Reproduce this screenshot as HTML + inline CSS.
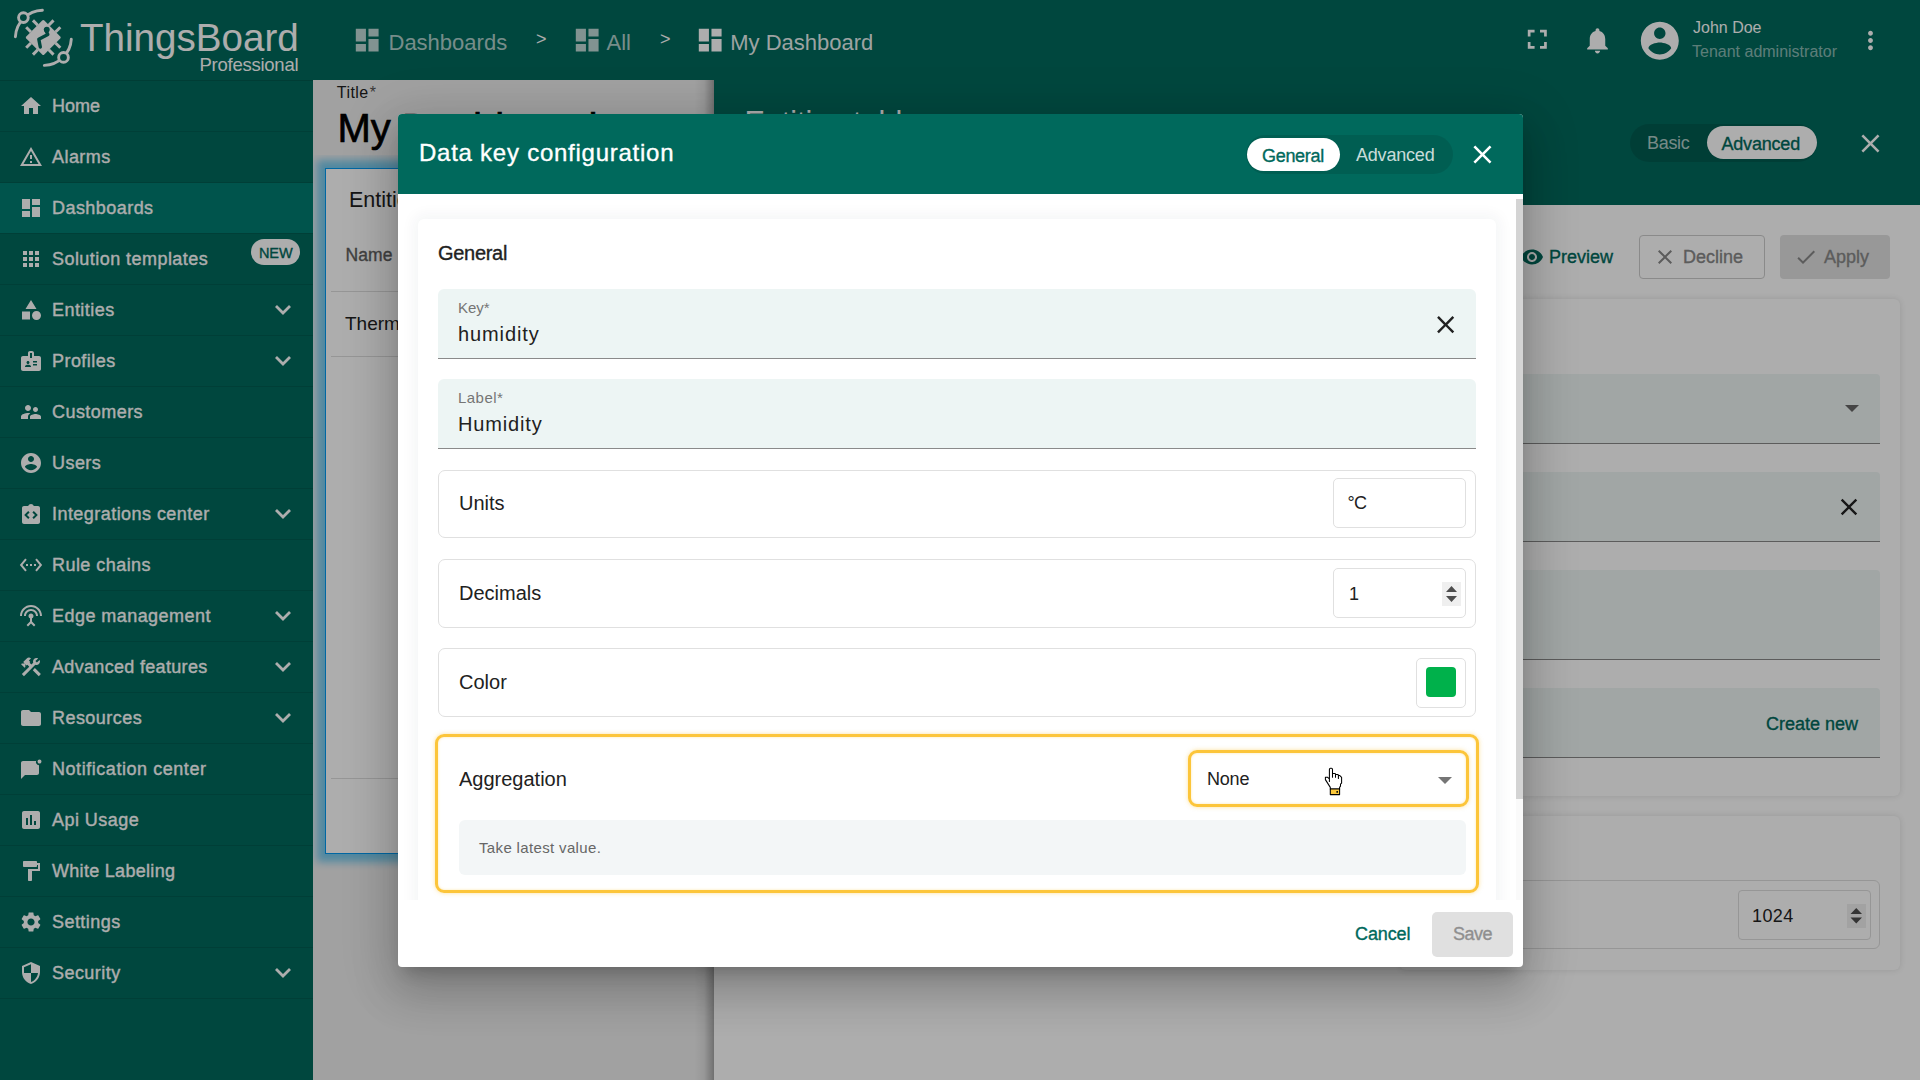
<!DOCTYPE html>
<html><head><meta charset="utf-8">
<style>
*{box-sizing:border-box;margin:0;padding:0}
html,body{width:1920px;height:1080px;overflow:hidden;background:#fff;font-family:"Liberation Sans",sans-serif}
.abs{position:absolute}
.t{position:absolute;white-space:nowrap;line-height:1}
</style></head>
<body>
<div class="abs" style="left:0px;top:0px;width:313px;height:1080px;background:#00695c"></div>
<div class="abs" style="left:0px;top:80px;width:313px;height:1px;background:#005a4f"></div>
<div class="abs" style="left:0px;top:131px;width:313px;height:1px;background:#005e52"></div>
<svg class="abs" style="left:19px;top:94px;" width="24" height="24" viewBox="0 0 24 24"><path d="M10 20v-6h4v6h5v-8h3L12 3 2 12h3v8z" fill="#fff"/></svg>
<div class="t" style="left:52px;top:96.76px;font-size:18px;color:#fff;font-weight:normal;-webkit-text-stroke-width:0.35px;letter-spacing:0.0px">Home</div>
<div class="abs" style="left:0px;top:182px;width:313px;height:1px;background:#005e52"></div>
<svg class="abs" style="left:19px;top:145px;" width="24" height="24" viewBox="0 0 24 24"><path d="M12 5.99L19.53 19H4.47L12 5.99M12 2L1 21h22L12 2zm1 14h-2v2h2v-2zm0-6h-2v4h2v-4z" fill="#fff"/></svg>
<div class="t" style="left:52px;top:147.76px;font-size:18px;color:#fff;font-weight:normal;-webkit-text-stroke-width:0.35px;letter-spacing:0.45px">Alarms</div>
<div class="abs" style="left:0px;top:183px;width:313px;height:50px;background:#007c70"></div>
<div class="abs" style="left:0px;top:233px;width:313px;height:1px;background:#005e52"></div>
<svg class="abs" style="left:19px;top:196px;" width="24" height="24" viewBox="0 0 24 24"><path d="M3 13h8V3H3v10zm0 8h8v-6H3v6zm10 0h8V11h-8v10zm0-18v6h8V3h-8z" fill="#fff"/></svg>
<div class="t" style="left:52px;top:198.76px;font-size:18px;color:#fff;font-weight:normal;-webkit-text-stroke-width:0.35px;letter-spacing:0.45px">Dashboards</div>
<div class="abs" style="left:0px;top:284px;width:313px;height:1px;background:#005e52"></div>
<svg class="abs" style="left:19px;top:247px;" width="24" height="24" viewBox="0 0 24 24"><path d="M4 8h4V4H4v4zm6 12h4v-4h-4v4zm-6 0h4v-4H4v4zm0-6h4v-4H4v4zm6 0h4v-4h-4v4zm6-10v4h4V4h-4zm-6 4h4V4h-4v4zm6 6h4v-4h-4v4zm0 6h4v-4h-4v4z" fill="#fff"/></svg>
<div class="t" style="left:52px;top:249.76px;font-size:18px;color:#fff;font-weight:normal;-webkit-text-stroke-width:0.35px;letter-spacing:0.45px">Solution templates</div>
<div class="abs" style="left:0px;top:335px;width:313px;height:1px;background:#005e52"></div>
<svg class="abs" style="left:19px;top:298px;" width="24" height="24" viewBox="0 0 24 24"><path d="M12 2l-5.5 9h11L12 2zm5.5 11c-2.49 0-4.5 2.01-4.5 4.5s2.01 4.5 4.5 4.5 4.5-2.01 4.5-4.5-2.01-4.5-4.5-4.5zM3 21.5h8v-8H3v8z" fill="#fff"/></svg>
<div class="t" style="left:52px;top:300.76px;font-size:18px;color:#fff;font-weight:normal;-webkit-text-stroke-width:0.35px;letter-spacing:0.45px">Entities</div>
<svg class="abs" style="left:273px;top:297px;" width="20" height="20" viewBox="0 0 20 20"><polyline points="3,9 10,16 17,9" fill="none" stroke="#fff" stroke-width="2.8"/></svg>
<div class="abs" style="left:0px;top:386px;width:313px;height:1px;background:#005e52"></div>
<svg class="abs" style="left:19px;top:349px;" width="24" height="24" viewBox="0 0 24 24"><path d="M20 7h-5V4c0-1.1-.9-2-2-2h-2c-1.1 0-2 .9-2 2v3H4c-1.1 0-2 .9-2 2v11c0 1.1.9 2 2 2h16c1.1 0 2-.9 2-2V9c0-1.1-.9-2-2-2zM9 12c.83 0 1.5.67 1.5 1.5S9.83 15 9 15s-1.5-.67-1.5-1.5S8.17 12 9 12zm3 6H6v-.43c0-.6.36-1.15.92-1.39.64-.28 1.34-.43 2.08-.43s1.44.15 2.08.43c.55.24.92.78.92 1.39V18zm1-9h-2V4h2v5zm5 7.5h-4V15h4v1.5zm0-3h-4V12h4v1.5z" fill="#fff"/></svg>
<div class="t" style="left:52px;top:351.76px;font-size:18px;color:#fff;font-weight:normal;-webkit-text-stroke-width:0.35px;letter-spacing:0.45px">Profiles</div>
<svg class="abs" style="left:273px;top:348px;" width="20" height="20" viewBox="0 0 20 20"><polyline points="3,9 10,16 17,9" fill="none" stroke="#fff" stroke-width="2.8"/></svg>
<div class="abs" style="left:0px;top:437px;width:313px;height:1px;background:#005e52"></div>
<svg class="abs" style="left:19px;top:400px;" width="24" height="24" viewBox="0 0 24 24"><path d="M16.5 12c1.38 0 2.49-1.12 2.49-2.5S17.88 7 16.5 7C15.12 7 14 8.12 14 9.5s1.12 2.5 2.5 2.5zM9 11c1.66 0 2.99-1.34 2.99-3S10.66 5 9 5C7.34 5 6 6.34 6 8s1.34 3 3 3zm7.5 3c-1.83 0-5.5.92-5.5 2.75V19h11v-2.25c0-1.83-3.67-2.75-5.5-2.75zM9 13c-2.33 0-7 1.17-7 3.5V19h7v-2.25c0-.85.33-2.34 2.37-3.47C10.5 13.1 9.66 13 9 13z" fill="#fff"/></svg>
<div class="t" style="left:52px;top:402.76px;font-size:18px;color:#fff;font-weight:normal;-webkit-text-stroke-width:0.35px;letter-spacing:0.45px">Customers</div>
<div class="abs" style="left:0px;top:488px;width:313px;height:1px;background:#005e52"></div>
<svg class="abs" style="left:19px;top:451px;" width="24" height="24" viewBox="0 0 24 24"><path d="M12 2C6.48 2 2 6.48 2 12s4.48 10 10 10 10-4.48 10-10S17.52 2 12 2zm0 3c1.66 0 3 1.34 3 3s-1.34 3-3 3-3-1.34-3-3 1.34-3 3-3zm0 14.2c-2.5 0-4.71-1.28-6-3.22.03-1.99 4-3.08 6-3.08 1.99 0 5.97 1.09 6 3.08-1.29 1.94-3.5 3.22-6 3.22z" fill="#fff"/></svg>
<div class="t" style="left:52px;top:453.76px;font-size:18px;color:#fff;font-weight:normal;-webkit-text-stroke-width:0.35px;letter-spacing:0.45px">Users</div>
<div class="abs" style="left:0px;top:539px;width:313px;height:1px;background:#005e52"></div>
<svg class="abs" style="left:19px;top:502px;" width="24" height="24" viewBox="0 0 24 24"><path d="M19 4h-4.2c-.4-1.2-1.5-2-2.8-2s-2.4.8-2.8 2H5c-1.1 0-2 .9-2 2v14c0 1.1.9 2 2 2h14c1.1 0 2-.9 2-2V6c0-1.1-.9-2-2-2zM10.6 15.6L9.2 17l-4-4 4-4 1.4 1.4L8 13l2.6 2.6zm4.2 1.4l-1.4-1.4L16 13l-2.6-2.6L14.8 9l4 4-4 4z" fill="#fff"/></svg>
<div class="t" style="left:52px;top:504.76px;font-size:18px;color:#fff;font-weight:normal;-webkit-text-stroke-width:0.35px;letter-spacing:0.45px">Integrations center</div>
<svg class="abs" style="left:273px;top:501px;" width="20" height="20" viewBox="0 0 20 20"><polyline points="3,9 10,16 17,9" fill="none" stroke="#fff" stroke-width="2.8"/></svg>
<div class="abs" style="left:0px;top:590px;width:313px;height:1px;background:#005e52"></div>
<svg class="abs" style="left:19px;top:553px;" width="24" height="24" viewBox="0 0 24 24"><path d="M7.77 6.76L6.23 5.48.82 12l5.41 6.52 1.54-1.28L3.42 12l4.35-5.24zM7 13h2v-2H7v2zm10-2h-2v2h2v-2zm-6 2h2v-2h-2v2zm6.77-7.52l-1.54 1.28L20.58 12l-4.35 5.24 1.54 1.28L23.18 12l-5.41-6.52z" fill="#fff"/></svg>
<div class="t" style="left:52px;top:555.76px;font-size:18px;color:#fff;font-weight:normal;-webkit-text-stroke-width:0.35px;letter-spacing:0.45px">Rule chains</div>
<div class="abs" style="left:0px;top:641px;width:313px;height:1px;background:#005e52"></div>
<svg class="abs" style="left:19px;top:604px;" width="24" height="24" viewBox="0 0 24 24"><path d="M12 5c-3.87 0-7 3.13-7 7h2c0-2.76 2.24-5 5-5s5 2.24 5 5h2c0-3.87-3.13-7-7-7zm1 9.29c.88-.39 1.5-1.26 1.5-2.29 0-1.38-1.12-2.5-2.5-2.5S9.5 10.62 9.5 12c0 1.02.62 1.9 1.5 2.29v3.3L7.59 21 9 22.41l3-3 3 3L16.41 21 13 17.59v-3.3zM12 1C5.93 1 1 5.93 1 12h2c0-4.97 4.03-9 9-9s9 4.03 9 9h2c0-6.070-4.93-11-11-11z" fill="#fff"/></svg>
<div class="t" style="left:52px;top:606.76px;font-size:18px;color:#fff;font-weight:normal;-webkit-text-stroke-width:0.35px;letter-spacing:0.45px">Edge management</div>
<svg class="abs" style="left:273px;top:603px;" width="20" height="20" viewBox="0 0 20 20"><polyline points="3,9 10,16 17,9" fill="none" stroke="#fff" stroke-width="2.8"/></svg>
<div class="abs" style="left:0px;top:692px;width:313px;height:1px;background:#005e52"></div>
<svg class="abs" style="left:19px;top:655px;" width="24" height="24" viewBox="0 0 24 24"><path d="M13.783 15.172l2.121-2.121 5.996 5.996-2.121 2.121zM17.5 10c1.93 0 3.5-1.57 3.5-3.5 0-.58-.16-1.12-.41-1.6l-2.7 2.7-1.49-1.49 2.7-2.7c-.48-.25-1.02-.41-1.6-.41C15.57 3 14 4.57 14 6.5c0 .41.08.8.21 1.16l-1.85 1.85-1.78-1.78.71-.71-1.41-1.41L12 3.49c-1.17-1.17-3.07-1.17-4.24 0L4.22 7.03l1.41 1.41H2.81l-.71.71 3.54 3.54.71-.71V9.15l1.41 1.41.71-.71 1.78 1.78-7.41 7.41 2.12 2.12L16.34 9.79c.36.13.75.21 1.16.21z" fill="#fff"/></svg>
<div class="t" style="left:52px;top:657.76px;font-size:18px;color:#fff;font-weight:normal;-webkit-text-stroke-width:0.35px;letter-spacing:0.32px">Advanced features</div>
<svg class="abs" style="left:273px;top:654px;" width="20" height="20" viewBox="0 0 20 20"><polyline points="3,9 10,16 17,9" fill="none" stroke="#fff" stroke-width="2.8"/></svg>
<div class="abs" style="left:0px;top:743px;width:313px;height:1px;background:#005e52"></div>
<svg class="abs" style="left:19px;top:706px;" width="24" height="24" viewBox="0 0 24 24"><path d="M10 4H4c-1.1 0-1.99.9-1.99 2L2 18c0 1.1.9 2 2 2h16c1.1 0 2-.9 2-2V8c0-1.1-.9-2-2-2h-8l-2-2z" fill="#fff"/></svg>
<div class="t" style="left:52px;top:708.76px;font-size:18px;color:#fff;font-weight:normal;-webkit-text-stroke-width:0.35px;letter-spacing:0.45px">Resources</div>
<svg class="abs" style="left:273px;top:705px;" width="20" height="20" viewBox="0 0 20 20"><polyline points="3,9 10,16 17,9" fill="none" stroke="#fff" stroke-width="2.8"/></svg>
<div class="abs" style="left:0px;top:794px;width:313px;height:1px;background:#005e52"></div>
<svg class="abs" style="left:19px;top:757px;" width="24" height="24" viewBox="0 0 24 24"><path d="M17.5 3.5A3 3 0 0 0 20 8.2V16c0 1.1-.9 2-2 2H6l-4 4V6c0-1.1.9-2 2-2h13.5zM20.5 2.5a2 2 0 1 1 0 4 2 2 0 0 1 0-4z" fill="#fff"/></svg>
<div class="t" style="left:52px;top:759.76px;font-size:18px;color:#fff;font-weight:normal;-webkit-text-stroke-width:0.35px;letter-spacing:0.55px">Notification center</div>
<div class="abs" style="left:0px;top:845px;width:313px;height:1px;background:#005e52"></div>
<svg class="abs" style="left:19px;top:808px;" width="24" height="24" viewBox="0 0 24 24"><path d="M19 3H5c-1.1 0-2 .9-2 2v14c0 1.1.9 2 2 2h14c1.1 0 2-.9 2-2V5c0-1.1-.9-2-2-2zM9 17H7v-7h2v7zm4 0h-2V7h2v10zm4 0h-2v-4h2v4z" fill="#fff"/></svg>
<div class="t" style="left:52px;top:810.76px;font-size:18px;color:#fff;font-weight:normal;-webkit-text-stroke-width:0.35px;letter-spacing:0.45px">Api Usage</div>
<div class="abs" style="left:0px;top:896px;width:313px;height:1px;background:#005e52"></div>
<svg class="abs" style="left:19px;top:859px;" width="24" height="24" viewBox="0 0 24 24"><path d="M18 4V3c0-.55-.45-1-1-1H5c-.55 0-1 .45-1 1v4c0 .55.45 1 1 1h12c.55 0 1-.45 1-1V6h1v4H9v11c0 .55.45 1 1 1h2c.55 0 1-.45 1-1v-9h8V4h-3z" fill="#fff"/></svg>
<div class="t" style="left:52px;top:861.76px;font-size:18px;color:#fff;font-weight:normal;-webkit-text-stroke-width:0.35px;letter-spacing:0.3px">White Labeling</div>
<div class="abs" style="left:0px;top:947px;width:313px;height:1px;background:#005e52"></div>
<svg class="abs" style="left:19px;top:910px;" width="24" height="24" viewBox="0 0 24 24"><path d="M19.14 12.94c.04-.3.06-.61.06-.94 0-.32-.02-.64-.07-.94l2.03-1.58c.18-.14.23-.41.12-.61l-1.92-3.32c-.12-.22-.37-.29-.59-.22l-2.39.96c-.5-.38-1.03-.7-1.62-.94l-.36-2.54c-.04-.24-.24-.41-.48-.41h-3.84c-.24 0-.43.17-.47.41l-.36 2.54c-.59.24-1.130.57-1.62.94l-2.39-.96c-.22-.08-.47 0-.59.22L2.74 8.87c-.12.21-.08.47.12.61l2.03 1.58c-.05.3-.09.63-.09.94s.02.64.07.94l-2.03 1.58c-.18.14-.23.41-.12.61l1.92 3.32c.12.22.37.29.59.22l2.39-.96c.5.38 1.03.7 1.62.94l.36 2.54c.05.24.24.41.48.41h3.84c.24 0 .44-.17.47-.41l.36-2.54c.59-.24 1.13-.56 1.62-.94l2.39.96c.22.08.47 0 .59-.22l1.92-3.32c.12-.22.07-.47-.12-.61l-2.01-1.58zM12 15.6c-1.98 0-3.6-1.62-3.6-3.6s1.62-3.6 3.6-3.6 3.6 1.62 3.6 3.6-1.62 3.6-3.6 3.6z" fill="#fff"/></svg>
<div class="t" style="left:52px;top:912.76px;font-size:18px;color:#fff;font-weight:normal;-webkit-text-stroke-width:0.35px;letter-spacing:0.45px">Settings</div>
<div class="abs" style="left:0px;top:998px;width:313px;height:1px;background:#005e52"></div>
<svg class="abs" style="left:19px;top:961px;" width="24" height="24" viewBox="0 0 24 24"><path d="M12 1L3 5v6c0 5.55 3.84 10.74 9 12 5.16-1.26 9-6.45 9-12V5l-9-4zm0 10.99h7c-.53 4.12-3.28 7.79-7 8.94V12H5V6.3l7-3.11v8.8z" fill="#fff"/></svg>
<div class="t" style="left:52px;top:963.76px;font-size:18px;color:#fff;font-weight:normal;-webkit-text-stroke-width:0.35px;letter-spacing:0.45px">Security</div>
<svg class="abs" style="left:273px;top:960px;" width="20" height="20" viewBox="0 0 20 20"><polyline points="3,9 10,16 17,9" fill="none" stroke="#fff" stroke-width="2.8"/></svg>
<div class="abs" style="left:251px;top:239px;width:49px;height:26px;background:#fff;border-radius:13px"></div>
<div class="t" style="left:259px;top:245.73px;font-size:14.5px;color:#00695c;font-weight:normal;-webkit-text-stroke-width:0.35px;letter-spacing:-0.1px">NEW</div>
<svg class="abs" style="left:0px;top:0px;" width="80" height="80" viewBox="0 0 80 80">
<g fill="none" stroke="#fff" stroke-width="2.9" stroke-linecap="round">
<path d="M42.4 10.2 A27.9 27.9 0 0 0 15.4 36.8"/>
<path d="M71.3 39.2 A27.9 27.9 0 0 1 44.3 65.4"/>
<circle cx="23.4" cy="17.6" r="4.85" fill="#00695c"/>
<circle cx="63.5" cy="57.4" r="4.85" fill="#00695c"/>
</g>
<g transform="translate(43.25 37.5) rotate(45)" fill="#fff">
<rect x="-12.75" y="-12.75" width="25.5" height="25.5" rx="1.5"/><rect x="-6.3" y="-19.35" width="3" height="6.8"/><rect x="-6.3" y="12.55" width="3" height="6.8"/><rect x="-19.35" y="-6.3" width="6.8" height="3"/><rect x="12.55" y="-6.3" width="6.8" height="3"/><rect x="3.3" y="-19.35" width="3" height="6.8"/><rect x="3.3" y="12.55" width="3" height="6.8"/><rect x="-19.35" y="3.3" width="6.8" height="3"/><rect x="12.55" y="3.3" width="6.8" height="3"/>
</g>
<g fill="none" stroke="#00695c" stroke-width="3.4" stroke-linecap="round" stroke-linejoin="round">
<path d="M45.5 29.5 L47.8 34.5 L38.8 39.2 L40.3 47"/>
</g>
<circle cx="46.8" cy="29.6" r="2.9" fill="#00695c"/>
</svg>
<div class="t" style="left:80px;top:18.53px;font-size:38.6px;color:#fff;font-weight:normal;">ThingsBoard</div>
<div class="t" style="left:199.5px;top:55.54px;font-size:18.5px;color:#fff;font-weight:normal;letter-spacing:-0.25px">Professional</div>
<div class="abs" style="left:313px;top:0px;width:1607px;height:80px;background:#00695c"></div>
<svg class="abs" style="left:352.3px;top:25.2px;" width="30.4" height="30.4" viewBox="0 0 24 24"><path d="M3 13h8V3H3v10zm0 8h8v-6H3v6zm10 0h8V11h-8v10zm0-18v6h8V3h-8z" fill="rgba(255,255,255,0.75)"/></svg>
<div class="t" style="left:388.5px;top:31.58px;font-size:22px;color:rgba(255,255,255,0.7);font-weight:normal;">Dashboards</div>
<div class="t" style="left:536px;top:29.76px;font-size:18px;color:#fff;font-weight:normal;">&gt;</div>
<svg class="abs" style="left:571.5px;top:25.2px;" width="30.4" height="30.4" viewBox="0 0 24 24"><path d="M3 13h8V3H3v10zm0 8h8v-6H3v6zm10 0h8V11h-8v10zm0-18v6h8V3h-8z" fill="rgba(255,255,255,0.75)"/></svg>
<div class="t" style="left:606.5px;top:31.58px;font-size:22px;color:rgba(255,255,255,0.7);font-weight:normal;">All</div>
<div class="t" style="left:660px;top:29.76px;font-size:18px;color:#fff;font-weight:normal;">&gt;</div>
<svg class="abs" style="left:695.2px;top:25.2px;" width="30.4" height="30.4" viewBox="0 0 24 24"><path d="M3 13h8V3H3v10zm0 8h8v-6H3v6zm10 0h8V11h-8v10zm0-18v6h8V3h-8z" fill="#fff"/></svg>
<div class="t" style="left:730.2px;top:31.58px;font-size:22px;color:rgba(255,255,255,0.92);font-weight:normal;">My Dashboard</div>
<svg class="abs" style="left:1521.2px;top:23.2px;" width="32.6" height="32.6" viewBox="0 0 24 24"><path d="M7 14H5v5h5v-2H7v-3zm-2-4h2V7h3V5H5v5zm12 7h-3v2h5v-5h-2v3zM14 5v2h3v3h2V5h-5z" fill="#fff"/></svg>
<svg class="abs" style="left:1581.8px;top:24.7px;" width="31" height="31" viewBox="0 0 24 24"><path d="M12 22c1.1 0 2-.9 2-2h-4c0 1.1.89 2 2 2zm6-6v-5c0-3.07-1.64-5.64-4.5-6.32V4c0-.83-.67-1.5-1.5-1.5s-1.5.67-1.5 1.5v.68C7.63 5.36 6 7.92 6 11v5l-2 2v1h16v-1l-2-2z" fill="#fff"/></svg>
<svg class="abs" style="left:1637.2px;top:18px;" width="45.6" height="45.6" viewBox="0 0 24 24"><path d="M12 2C6.48 2 2 6.48 2 12s4.48 10 10 10 10-4.48 10-10S17.52 2 12 2zm0 3c1.66 0 3 1.34 3 3s-1.34 3-3 3-3-1.34-3-3 1.34-3 3-3zm0 14.2c-2.5 0-4.71-1.28-6-3.22.03-1.99 4-3.08 6-3.08 1.99 0 5.97 1.09 6 3.08-1.29 1.94-3.5 3.22-6 3.22z" fill="#fff"/></svg>
<div class="t" style="left:1693px;top:19.86px;font-size:16px;color:#fff;font-weight:normal;">John Doe</div>
<div class="t" style="left:1692px;top:44.46px;font-size:16px;color:rgba(255,255,255,0.55);font-weight:normal;">Tenant administrator</div>
<svg class="abs" style="left:1855.6px;top:25.5px;" width="29" height="29" viewBox="0 0 24 24"><path d="M12 8c1.1 0 2-.9 2-2s-.9-2-2-2-2 .9-2 2 .9 2 2 2zm0 2c-1.1 0-2 .9-2 2s.9 2 2 2 2-.9 2-2-.9-2-2-2zm0 6c-1.1 0-2 .9-2 2s.9 2 2 2 2-.9 2-2-.9-2-2-2z" fill="#fff"/></svg>
<div class="abs" style="left:313px;top:80px;width:401px;height:1000px;background:#eeeeee"></div>
<div class="t" style="left:336.8px;top:85.46px;font-size:16px;color:#212121;font-weight:normal;letter-spacing:0.45px">Title<span style="color:#555;margin-left:1px">*</span></div>
<div class="t" style="left:337.5px;top:107.74px;font-size:40px;color:#000;font-weight:normal;-webkit-text-stroke-width:0.35px;-webkit-text-stroke-width:0.7px">My Dashboard</div>
<div class="abs" style="left:313px;top:155px;width:401px;height:925px;overflow:hidden"><div class="abs" style="left:12px;top:13px;width:420px;height:686px;background:#fff;border:1px solid #0099f0;box-shadow:0 0 8px 8px rgba(0,165,235,0.5)"></div>
</div><div class="t" style="left:349px;top:189.80px;font-size:21.5px;color:#212121;font-weight:normal;">Entities table</div>
<div class="t" style="left:345.5px;top:247.09px;font-size:17.5px;color:#616161;font-weight:normal;-webkit-text-stroke-width:0.35px;letter-spacing:0.1px">Name</div>
<div class="abs" style="left:331px;top:291px;width:400px;height:1px;background:#ddd"></div>
<div class="t" style="left:345px;top:313.52px;font-size:19px;color:#212121;font-weight:normal;">Thermostat</div>
<div class="abs" style="left:331px;top:356px;width:400px;height:1px;background:#ddd"></div>
<div class="abs" style="left:331px;top:778px;width:400px;height:1px;background:#ddd"></div>
<div class="abs" style="left:694px;top:80px;width:20px;height:1000px;background:linear-gradient(to right,rgba(0,0,0,0),rgba(0,0,0,0.06) 50%,rgba(0,0,0,0.3))"></div>
<div class="abs" style="left:714px;top:80px;width:1206px;height:1000px;background:#fff"></div>
<div class="abs" style="left:714px;top:80px;width:1206px;height:125px;background:#00695c"></div>
<div class="t" style="left:744.5px;top:106.98px;font-size:30.5px;color:#fff;font-weight:normal;">Entities table</div>
<div class="abs" style="left:1630px;top:124px;width:187px;height:38px;background:rgba(0,0,0,0.12);border-radius:19px"></div>
<div class="abs" style="left:1707px;top:126px;width:110px;height:33px;background:#fff;border-radius:17px"></div>
<div class="t" style="left:1647px;top:134.06px;font-size:18px;color:rgba(255,255,255,0.7);font-weight:normal;letter-spacing:-0.3px">Basic</div>
<div class="t" style="left:1721.5px;top:134.56px;font-size:18px;color:#00695c;font-weight:normal;-webkit-text-stroke-width:0.35px;letter-spacing:-0.2px">Advanced</div>
<svg class="abs" style="left:1854.6px;top:128.1px;" width="30.9" height="30.9" viewBox="0 0 24 24"><path d="M19 6.41L17.59 5 12 10.59 6.41 5 5 6.41 10.59 12 5 17.59 6.41 19 12 13.41 17.59 19 19 17.59 13.41 12z" fill="#fff"/></svg>
<svg class="abs" style="left:1520px;top:245px;" width="24" height="24" viewBox="0 0 24 24"><path d="M12 4.5C7 4.5 2.73 7.61 1 12c1.73 4.39 6 7.5 11 7.5s9.27-3.11 11-7.5c-1.73-4.39-6-7.5-11-7.5zM12 17c-2.76 0-5-2.24-5-5s2.24-5 5-5 5 2.24 5 5-2.24 5-5 5zm0-8c-1.66 0-3 1.34-3 3s1.34 3 3 3 3-1.34 3-3-1.34-3-3-3z" fill="#00695c"/></svg>
<div class="t" style="left:1549px;top:247.76px;font-size:18px;color:#00695c;font-weight:normal;-webkit-text-stroke-width:0.35px;">Preview</div>
<div class="abs" style="left:1639px;top:235px;width:126px;height:44px;border:1px solid #ccc;border-radius:4px"></div>
<svg class="abs" style="left:1653px;top:245px;" width="24" height="24" viewBox="0 0 24 24"><path d="M19 6.41L17.59 5 12 10.59 6.41 5 5 6.41 10.59 12 5 17.59 6.41 19 12 13.41 17.59 19 19 17.59 13.41 12z" fill="#888"/></svg>
<div class="t" style="left:1683px;top:247.76px;font-size:18px;color:#888;font-weight:normal;-webkit-text-stroke-width:0.35px;">Decline</div>
<div class="abs" style="left:1780px;top:235px;width:110px;height:44px;background:#e0e0e0;border-radius:4px"></div>
<svg class="abs" style="left:1794px;top:245px;" width="24" height="24" viewBox="0 0 24 24"><path d="M9 16.17L4.83 12l-1.42 1.41L9 19 21 7l-1.41-1.41z" fill="#888"/></svg>
<div class="t" style="left:1824px;top:247.76px;font-size:18px;color:#888;font-weight:normal;-webkit-text-stroke-width:0.35px;">Apply</div>
<div class="abs" style="left:714px;top:285px;width:1206px;height:795px;background:#fff"></div>
<div class="abs" style="left:1400px;top:299px;width:500px;height:497px;background:#fff;border-radius:6px;box-shadow:0 0 6px rgba(0,0,0,0.12)"></div>
<div class="abs" style="left:1400px;top:374px;width:480px;height:70px;background:#eef5f4;border-bottom:1px solid #888;border-radius:4px 4px 0 0"></div>
<div class="abs" style="left:1845px;top:405px;width:0;height:0;border-left:7px solid transparent;border-right:7px solid transparent;border-top:7px solid #666"></div><div class="abs" style="left:1400px;top:472px;width:480px;height:70px;background:#eef5f4;border-bottom:1px solid #888;border-radius:4px 4px 0 0"></div>
<svg class="abs" style="left:1835px;top:493px;" width="28" height="28" viewBox="0 0 24 24"><path d="M19 6.41L17.59 5 12 10.59 6.41 5 5 6.41 10.59 12 5 17.59 6.41 19 12 13.41 17.59 19 19 17.59 13.41 12z" fill="#222"/></svg>
<div class="abs" style="left:1400px;top:570px;width:480px;height:90px;background:#eef5f4;border-bottom:1px solid #888;border-radius:4px 4px 0 0"></div>
<div class="abs" style="left:1400px;top:688px;width:480px;height:70px;background:#eef5f4;border-bottom:1px solid #888;border-radius:4px 4px 0 0"></div>
<div class="t" style="left:1766px;top:714.76px;font-size:18px;color:#00695c;font-weight:normal;-webkit-text-stroke-width:0.35px;">Create new</div>
<div class="abs" style="left:1400px;top:816px;width:500px;height:154px;background:#fff;border-radius:6px;box-shadow:0 0 6px rgba(0,0,0,0.12)"></div>
<div class="abs" style="left:1400px;top:880px;width:480px;height:69px;border:1px solid #ddd;border-radius:6px"></div>
<div class="abs" style="left:1738px;top:890px;width:133px;height:50px;border:1px solid #ddd;border-radius:4px"></div>
<div class="t" style="left:1752px;top:907.26px;font-size:18px;color:#212121;font-weight:normal;letter-spacing:0.4px">1024</div>
<div class="abs" style="left:1847px;top:904px;width:18.5px;height:23.5px;background:#efefef"></div>
<svg class="abs" style="left:1847px;top:904px;" width="18.5" height="23.5" viewBox="0 0 18.5 23.5"><path d="M3.5 10 L9.25 4 L15 10Z M3.5 13.5 L9.25 19.5 L15 13.5Z" fill="#4d4d4d"/></svg>
<div class="abs" style="left:0px;top:0px;width:1920px;height:1080px;background:rgba(0,0,0,0.32)"></div>
<div class="abs" style="left:398px;top:114px;width:1125px;height:853px;background:#fff;border-radius:4px;overflow:hidden;box-shadow:0 11px 15px -7px rgba(0,0,0,.2),0 24px 44px 4px rgba(0,0,0,.15),0 9px 52px 10px rgba(0,0,0,.12)">
<div class="abs" style="left:0px;top:0px;width:1125px;height:80px;background:#00695c"></div>
<div class="t" style="left:21px;top:26.98px;font-size:24px;color:#fff;font-weight:normal;-webkit-text-stroke-width:0.35px;letter-spacing:0.75px">Data key configuration</div>
<div class="abs" style="left:848px;top:20.5px;width:207px;height:39px;background:rgba(0,0,0,0.1);border-radius:20px"></div>
<div class="abs" style="left:848.5px;top:24px;width:93px;height:33px;background:#fff;border-radius:17px"></div>
<div class="t" style="left:864px;top:32.76px;font-size:18px;color:#00695c;font-weight:normal;-webkit-text-stroke-width:0.35px;letter-spacing:-0.3px">General</div>
<div class="t" style="left:958px;top:31.76px;font-size:18px;color:rgba(255,255,255,0.8);font-weight:normal;letter-spacing:-0.2px">Advanced</div>
<svg class="abs" style="left:1069.1px;top:25.400000000000006px;" width="30.9" height="30.9" viewBox="0 0 24 24"><path d="M19 6.41L17.59 5 12 10.59 6.41 5 5 6.41 10.59 12 5 17.59 6.41 19 12 13.41 17.59 19 19 17.59 13.41 12z" fill="#fff"/></svg>
<div class="abs" style="left:0;top:80px;width:1125px;height:706px;overflow:hidden;background:#fff">
<div class="abs" style="left:20px;top:25px;width:1078px;height:700px;background:#fff;border-radius:6px;box-shadow:0 0 14px 5px rgba(20,50,70,0.045)"></div>
<div class="t" style="left:40px;top:49.37px;font-size:20px;color:#212121;font-weight:normal;-webkit-text-stroke-width:0.35px;letter-spacing:-0.3px">General</div>
<div class="abs" style="left:40px;top:95px;width:1038px;height:70px;background:#edf5f4;border-bottom:1px solid #8a8a8a;border-radius:6px 6px 0 0"></div>
<div class="t" style="left:60px;top:106.30px;font-size:15px;color:#757575;font-weight:normal;">Key*</div>
<div class="t" style="left:60px;top:129.77px;font-size:20px;color:#212121;font-weight:normal;letter-spacing:0.9px">humidity</div>
<svg class="abs" style="left:1033.3px;top:115.5px;" width="29.3" height="29.3" viewBox="0 0 24 24"><path d="M19 6.41L17.59 5 12 10.59 6.41 5 5 6.41 10.59 12 5 17.59 6.41 19 12 13.41 17.59 19 19 17.59 13.41 12z" fill="#212121"/></svg>
<div class="abs" style="left:40px;top:185px;width:1038px;height:70px;background:#edf5f4;border-bottom:1px solid #8a8a8a;border-radius:6px 6px 0 0"></div>
<div class="t" style="left:60px;top:196.30px;font-size:15px;color:#757575;font-weight:normal;letter-spacing:0.45px">Label*</div>
<div class="t" style="left:60px;top:219.77px;font-size:20px;color:#212121;font-weight:normal;letter-spacing:0.85px">Humidity</div>
<div class="abs" style="left:40px;top:275.5px;width:1038px;height:68px;border:1px solid #e0e0e0;border-radius:7px"></div>
<div class="t" style="left:61px;top:298.57px;font-size:20px;color:#212121;font-weight:normal;">Units</div>
<div class="abs" style="left:935px;top:284px;width:133px;height:50px;border:1px solid #e0e0e0;border-radius:5px"></div>
<div class="t" style="left:949.5px;top:300.46px;font-size:18px;color:#212121;font-weight:normal;letter-spacing:-0.6px">°C</div>
<div class="abs" style="left:40px;top:364.5px;width:1038px;height:69px;border:1px solid #e0e0e0;border-radius:7px"></div>
<div class="t" style="left:61px;top:388.57px;font-size:20px;color:#212121;font-weight:normal;">Decimals</div>
<div class="abs" style="left:935px;top:374px;width:133px;height:50px;border:1px solid #e0e0e0;border-radius:5px"></div>
<div class="t" style="left:951px;top:390.76px;font-size:18px;color:#212121;font-weight:normal;">1</div>
<div class="abs" style="left:1044px;top:388px;width:19px;height:24px;background:#efefef"></div>
<svg class="abs" style="left:1044px;top:388px;" width="19" height="24" viewBox="0 0 19 24"><path d="M4 10 L9.5 4 L15 10Z M4 14 L9.5 20 L15 14Z" fill="#4d4d4d"/></svg>
<div class="abs" style="left:40px;top:454px;width:1038px;height:69px;border:1px solid #e0e0e0;border-radius:7px"></div>
<div class="t" style="left:61px;top:478.07px;font-size:20px;color:#212121;font-weight:normal;">Color</div>
<div class="abs" style="left:1018px;top:463.5px;width:50px;height:50px;border:1px solid #e0e0e0;border-radius:5px"></div>
<div class="abs" style="left:1028px;top:473px;width:30px;height:30px;background:#00b14b;border-radius:4px"></div>
<div class="abs" style="left:37px;top:540px;width:1044px;height:159px;border:3px solid #fcc53a;border-radius:9px;box-shadow:0 0 4px rgba(252,197,58,0.5), inset 0 0 3px rgba(252,197,58,0.4)"></div>
<div class="t" style="left:61px;top:575.27px;font-size:20px;color:#212121;font-weight:normal;">Aggregation</div>
<div class="abs" style="left:790px;top:556px;width:281px;height:57px;border:3px solid #fcc53a;border-radius:9px;box-shadow:0 0 4px rgba(252,197,58,0.5), inset 0 0 3px rgba(252,197,58,0.4)"></div>
<div class="t" style="left:809px;top:576.06px;font-size:18px;color:#212121;font-weight:normal;letter-spacing:-0.2px">None</div>
<div class="abs" style="left:1040px;top:583px;width:0;height:0;border-left:7px solid transparent;border-right:7px solid transparent;border-top:7px solid #757575"></div><div class="abs" style="left:61px;top:626px;width:1007px;height:55px;background:#f3f6f7;border-radius:6px"></div>
<div class="t" style="left:81px;top:645.50px;font-size:15px;color:#666;font-weight:normal;letter-spacing:0.35px">Take latest value.</div>
<div class="abs" style="left:1118px;top:5px;width:7px;height:701px;background:#fafafa"></div>
<div class="abs" style="left:1118px;top:5px;width:7px;height:600px;background:#d4d4d4"></div>
</div>
<div class="t" style="left:957px;top:810.56px;font-size:18px;color:#00695c;font-weight:normal;-webkit-text-stroke-width:0.35px;letter-spacing:-0.1px">Cancel</div>
<div class="abs" style="left:1034px;top:798px;width:81px;height:45px;background:#e0e0e0;border-radius:5px"></div>
<div class="t" style="left:1055px;top:810.56px;font-size:18px;color:#8f8f8f;font-weight:normal;-webkit-text-stroke-width:0.35px;letter-spacing:-0.5px">Save</div>
</div>
<svg class="abs" style="left:1315px;top:762px;" width="40" height="38" viewBox="0 0 40 38"><g stroke="#000" stroke-width="1.05" stroke-linejoin="round" stroke-linecap="round">
<path d="M14.4 19.4 V7.4 Q14.4 6.3 15.5 6.3 H16.4 Q17.5 6.3 17.5 7.4 V11.4 H19.8 Q20.5 11.4 20.5 12.3 V12.5 H22.7 Q23.4 12.5 23.4 13.4 H24.6 L26.6 15.3 V21.1 L25.5 22.2 V24.2 L24.6 25.3 V27 H15.3 V25.4 L10.4 17.6 V15.3 H12.7 L14.4 17" fill="#fff"/>
<path d="M17.5 11.4 V15.3 M20.5 12.5 V15.3 M23.4 13.4 V16.4" fill="none"/>
<rect x="15.3" y="27" width="9.3" height="5.6" fill="#fcc83a"/>
</g><rect x="21.4" y="29.1" width="1.6" height="1.6" fill="#000"/></svg>
</body></html>
